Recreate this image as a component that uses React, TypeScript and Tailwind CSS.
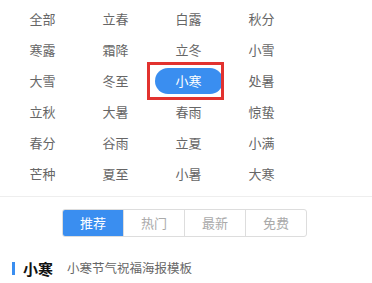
import React from "react";

const items = [
  "全部", "立春", "白露", "秋分",
  "寒露", "霜降", "立冬", "小雪",
  "大雪", "冬至", "小寒", "处暑",
  "立秋", "大暑", "春雨", "惊蛰",
  "春分", "谷雨", "立夏", "小满",
  "芒种", "夏至", "小暑", "大寒",
];

const tabs = ["推荐", "热门", "最新", "免费"];

export default function App() {
  return (
    <div
      className="w-[372px] h-[283px] bg-white overflow-hidden"
      style={{ fontFamily: '"Noto Sans CJK SC", "Noto Sans", sans-serif' }}
    >
      <div className="grid grid-cols-[repeat(4,73px)] pl-[6px] pt-[3px]">
        {items.map((t, i) => {
          const active = i === 10;
          return (
            <div key={i} className="relative h-[31px] flex items-center justify-center">
              {active ? (
                <>
                  <div className="absolute left-[-5px] top-[-3px] w-[77px] h-[38px] border-[3px] border-[#e2322f]" />
                  <div className="w-[68px] h-[26px] rounded-full bg-[#3a8ef0] text-white text-[13px] flex items-center justify-center">
                    {t}
                  </div>
                </>
              ) : (
                <span className="text-[13px] text-[#666] leading-none">{t}</span>
              )}
            </div>
          );
        })}
      </div>
      <div className="mt-[7px] h-px bg-[#eeeeee]" />
      <div className="mt-[12px] ml-[62px] flex w-[245px] h-[28px] border border-[#dddddd] rounded-[3px] overflow-hidden">
        {tabs.map((t, i) => (
          <div
            key={t}
            className={
              "flex-1 flex items-center justify-center text-[13px] " +
              (i === 0
                ? "bg-[#3a8ef0] text-white"
                : "text-[#aaaaaa] border-l border-[#dddddd]")
            }
          >
            {t}
          </div>
        ))}
      </div>
      <div className="mt-[24px] flex items-center pl-[12px]">
        <div className="w-[3px] h-[13px] bg-[#3a8ef0]" />
        <span className="ml-[8px] text-[15px] font-bold text-[#111] leading-none">小寒</span>
        <span className="ml-[14px] text-[12.5px] text-[#666] leading-none">小寒节气祝福海报模板</span>
      </div>
    </div>
  );
}
